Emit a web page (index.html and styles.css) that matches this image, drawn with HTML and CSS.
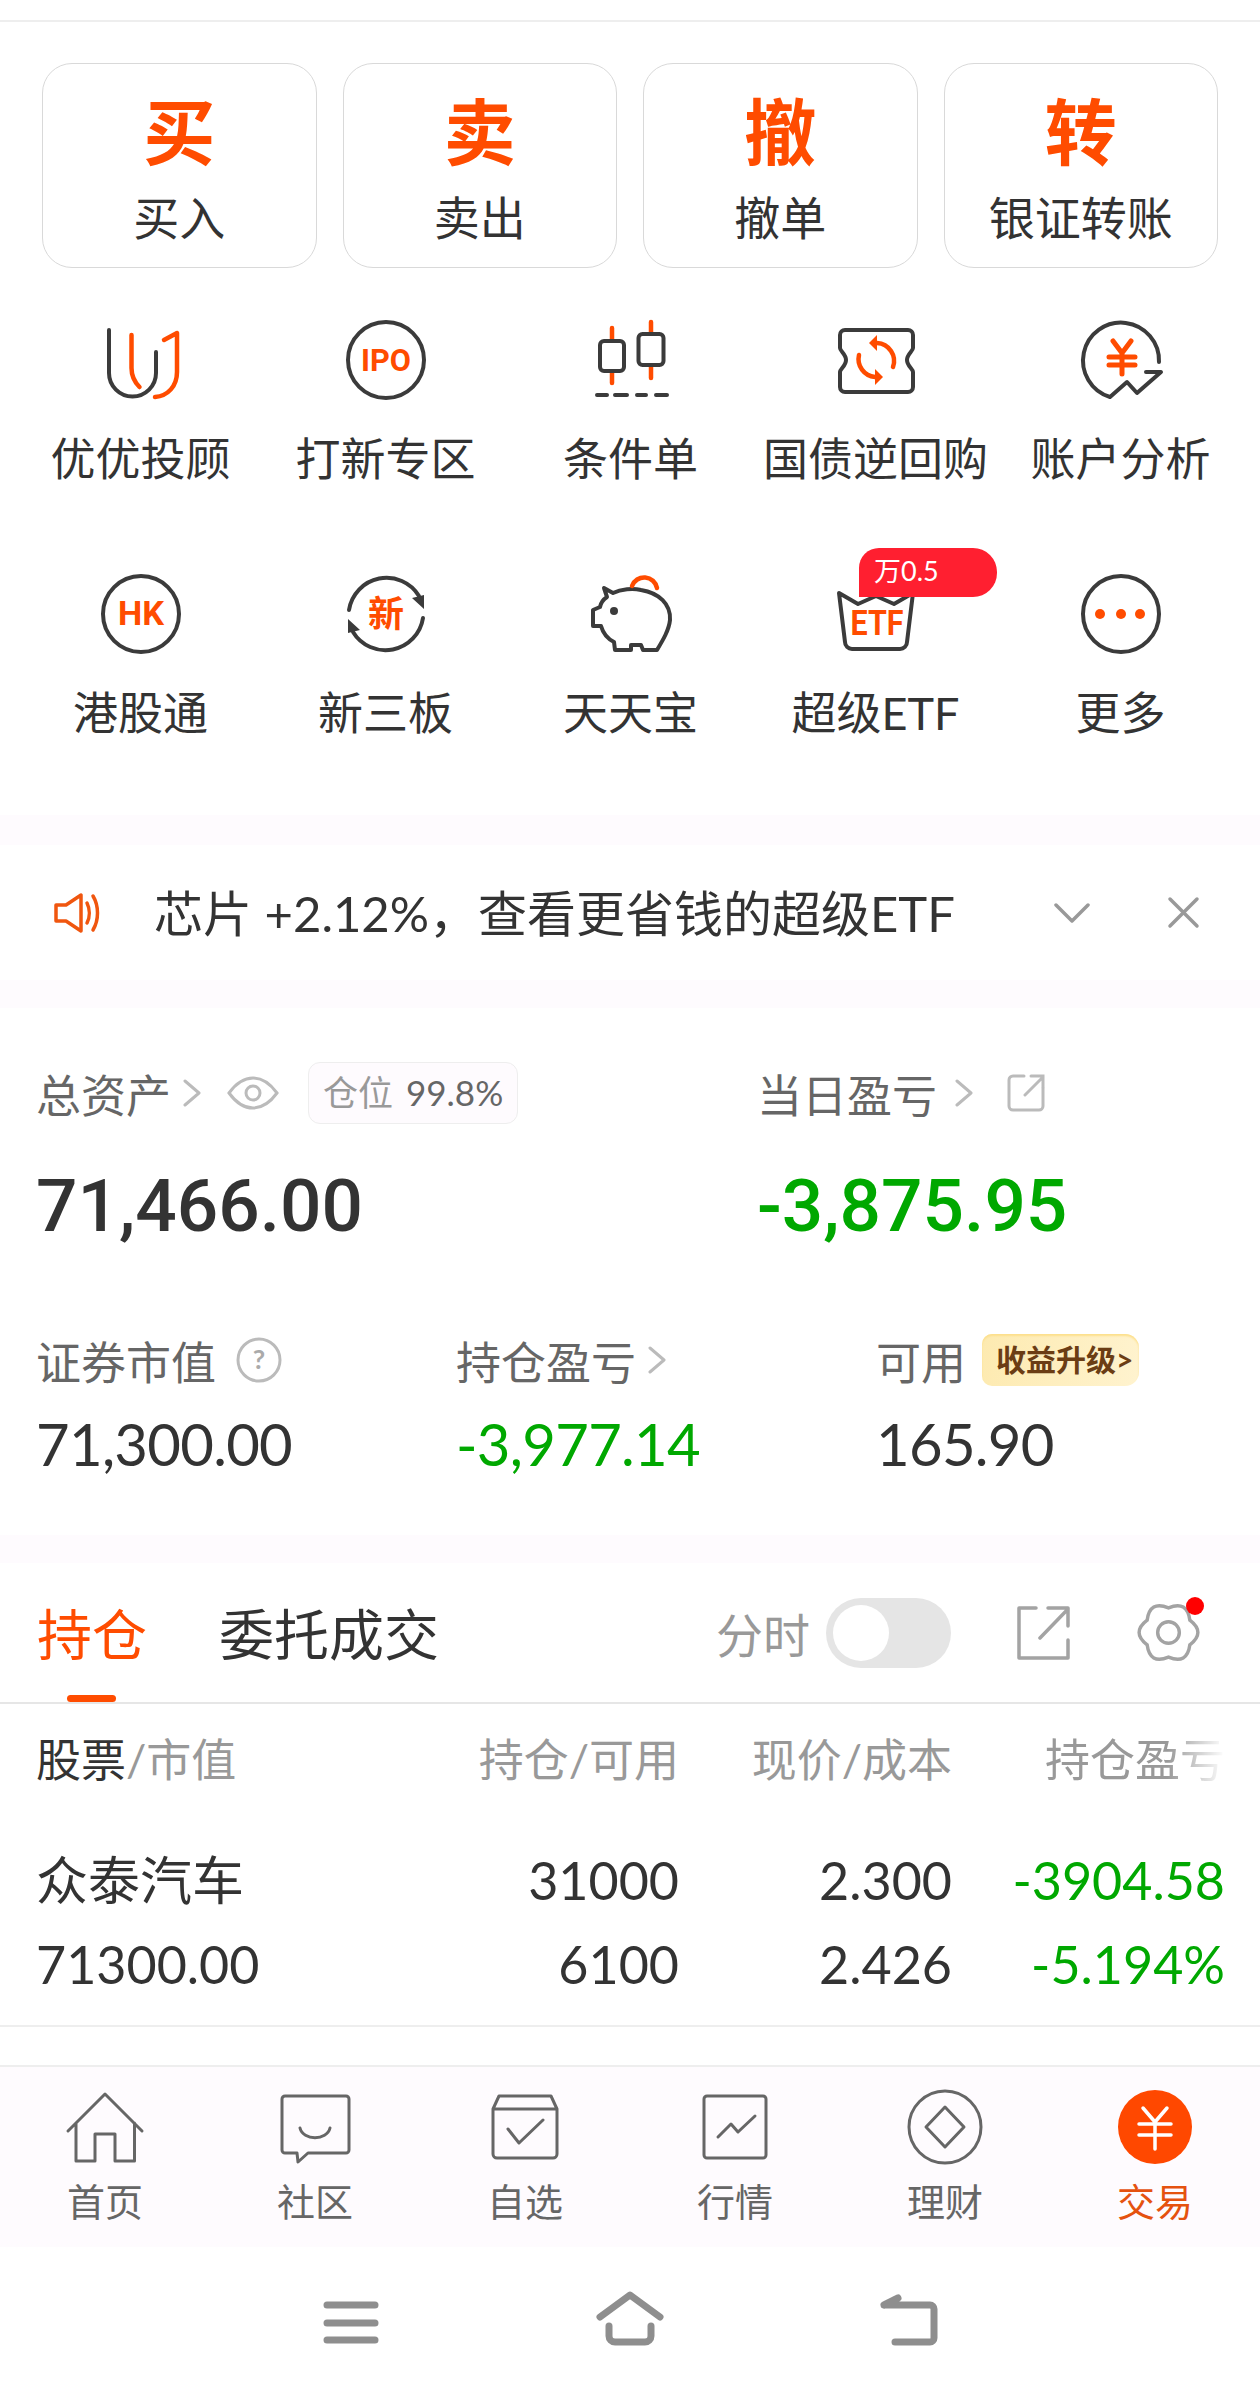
FILE: index.html
```html
<!DOCTYPE html>
<html lang="zh-CN">
<head>
    <meta charset="UTF-8">
    <meta name="viewport" content="width=device-width, initial-scale=1.0">
    <title>交易</title>
    <link rel="stylesheet" href="styles.css">
</head>
<body>
    <div class="top-line"></div>

    <div class="actions">
        <div class="action"><span class="action-big">买</span><span class="action-name">买入</span></div>
        <div class="action"><span class="action-big">卖</span><span class="action-name">卖出</span></div>
        <div class="action"><span class="action-big">撤</span><span class="action-name">撤单</span></div>
        <div class="action"><span class="action-big">转</span><span class="action-name">银证转账</span></div>
    </div>

    <div class="menu">
        <div class="menu-item">
            <svg class="ico" viewBox="0 0 80 80">
                <path class="ln" d="M8 10V53a23.500 23.500 0 0 0 47 0V32"/>
                <path class="or" d="M30.500 15V48c0 8 3 14 8 19M63 20l13-7V52c0 14-9 24-22 25"/>
            </svg>
            <span>优优投顾</span>
        </div>
        <div class="menu-item">
            <svg class="ico" viewBox="0 0 80 80">
                <circle class="ln" cx="40" cy="40" r="38"/>
                <text class="ico-text" x="40" y="51" font-size="31" textLength="50" lengthAdjust="spacingAndGlyphs">IPO</text>
            </svg>
            <span>打新专区</span>
        </div>
        <div class="menu-item">
            <svg class="ico" viewBox="0 0 80 80">
                <path class="or" d="M21 8V63M60 2V58"/>
                <rect class="ln fill-w" x="9" y="21" width="24" height="30" rx="4"/>
                <rect class="ln fill-w" x="47.500" y="14" width="25" height="31" rx="4"/>
                <path class="ln" d="M6 75H16M24 75H36M46 75H55M65 75H76"/>
            </svg>
            <span>条件单</span>
        </div>
        <div class="menu-item">
            <svg class="ico" viewBox="0 0 80 80">
                <path class="ln" d="M9 10H72a5 5 0 0 1 5 5V28c0 3-6 6-6 12s6 9 6 12V67a5 5 0 0 1-5 5H9a5 5 0 0 1-5-5V52c0-3 6-6 6-12s-6-9-6-12V15a5 5 0 0 1 5-5Z"/>
                <path class="or" d="M57 47A18 18 0 0 0 41 23M23 35A18 18 0 0 0 39 57"/>
                <path class="or-fill" d="M33 23 41 15V31ZM47 57 39 49V65Z"/>
            </svg>
            <span>国债逆回购</span>
        </div>
        <div class="menu-item">
            <svg class="ico" viewBox="0 0 80 80">
                <path class="ln" d="M78 42A38 38 0 1 0 29 77L46 62 56 73 80 52H65"/>
                <path class="or or-bold" d="M32 21 41 33 50 21M28 37H54M28 45H54M41 33V54"/>
            </svg>
            <span>账户分析</span>
        </div>
        <div class="menu-item">
            <svg class="ico" viewBox="0 0 80 80">
                <circle class="ln" cx="40" cy="40" r="38"/>
                <text class="ico-text" x="40" y="51" font-size="33" textLength="46" lengthAdjust="spacingAndGlyphs">HK</text>
            </svg>
            <span>港股通</span>
        </div>
        <div class="menu-item">
            <svg class="ico" viewBox="0 0 80 80">
                <path class="ln" d="M3 36A38 38 0 0 1 73 22M77 44A38 38 0 0 1 7 58"/>
                <path class="ln-fill" d="M66 24 78 21V35ZM14 56 2 59V45Z"/>
                <text class="ico-text" x="40" y="53" font-size="36">新</text>
            </svg>
            <span>新三板</span>
        </div>
        <div class="menu-item">
            <svg class="ico" viewBox="0 0 80 80">
                <path class="ln" d="M13 14 22 19C30 15 42 14 50 16 68 19 80 30 79 46 78 56 72 66 66 76H52L50 71H40V76H24L23 68C17 65 12 59 10 52H2V36L9 33C10 28 13 25 16 23Z"/>
                <circle class="ln-fill" cx="23" cy="37" r="4"/>
                <path class="or" d="M41 12A13 13 0 0 1 66 14"/>
            </svg>
            <span>天天宝</span>
        </div>
        <div class="menu-item">
            <svg class="ico" viewBox="0 0 80 80">
                <path class="ln" d="M3 19 22 30 40 22 58 30 77 19 71 68a7 7 0 0 1-7 7H16a7 7 0 0 1-7-7Z"/>
                <text class="ico-text" x="41" y="61" font-size="35" textLength="53" lengthAdjust="spacingAndGlyphs">ETF</text>
            </svg>
            <span>超级ETF</span>
            <em class="menu-badge">万0.5</em>
        </div>
        <div class="menu-item">
            <svg class="ico" viewBox="0 0 80 80">
                <circle class="ln" cx="40" cy="40" r="38"/>
                <circle class="or-fill" cx="19" cy="40" r="5"/>
                <circle class="or-fill" cx="40" cy="40" r="5"/>
                <circle class="or-fill" cx="59" cy="40" r="5"/>
            </svg>
            <span>更多</span>
        </div>
    </div>

    <div class="band"></div>

    <div class="notice">
        <svg class="notice-sound" viewBox="0 0 46 40">
            <path d="M2 12H12L27 2V38L12 28H2Z"/>
            <path d="M33 10c3 6 3 14 0 20M39 3c6 10 6 24 0 34"/>
        </svg>
        <span class="notice-text">芯片 +2.12%，查看更省钱的超级ETF</span>
        <svg class="notice-down" viewBox="0 0 36 22"><path d="M2 3 18 19 34 3"/></svg>
        <svg class="notice-close" viewBox="0 0 33 33"><path d="M3 3 30 30M30 3 3 30"/></svg>
    </div>

    <div class="band band-low"></div>

    <div class="assets">
        <div class="asset-top">
            <div>
                <div class="asset-label">
                    <span>总资产</span>
                    <svg class="chev" viewBox="0 0 18 30"><path d="M2 3 16 15 2 27"/></svg>
                    <svg class="eye" viewBox="0 0 52 34">
                        <path d="M2 17C10 6 18 2 26 2s16 4 24 15C42 28 34 32 26 32S10 28 2 17Z"/>
                        <circle cx="26" cy="17" r="7"/>
                    </svg>
                    <span class="cang"><i>仓位</i> 99.8%</span>
                </div>
                <div class="asset-big">71,466.00</div>
            </div>
            <div>
                <div class="asset-label">
                    <span>当日盈亏</span>
                    <svg class="chev chev-b" viewBox="0 0 18 30"><path d="M2 3 16 15 2 27"/></svg>
                    <svg class="share-sm" viewBox="0 0 38 38">
                        <path d="M17 2H6a4 4 0 0 0-4 4V32a4 4 0 0 0 4 4H32a4 4 0 0 0 4-4V14"/>
                        <path d="M18 21 36 3M24 2H36V13"/>
                    </svg>
                </div>
                <div class="asset-big green">-3,875.95</div>
            </div>
        </div>
        <div class="asset-bottom">
            <div>
                <div class="asset-label asset-label-s">
                    <span>证券市值</span>
                    <svg class="help" viewBox="0 0 46 46">
                        <circle cx="23" cy="23" r="21"/>
                        <text x="23" y="32" font-size="27">?</text>
                    </svg>
                </div>
                <div class="asset-mid">71,300.00</div>
            </div>
            <div>
                <div class="asset-label asset-label-s">
                    <span>持仓盈亏</span>
                    <svg class="chev" viewBox="0 0 18 30"><path d="M2 3 16 15 2 27"/></svg>
                </div>
                <div class="asset-mid green">-3,977.14</div>
            </div>
            <div>
                <div class="asset-label asset-label-s">
                    <span>可用</span>
                    <span class="upgrade">收益升级&gt;</span>
                </div>
                <div class="asset-mid">165.90</div>
            </div>
        </div>
    </div>

    <div class="band band-tab"></div>

    <div class="tabs">
        <span class="tab tab-on">持仓</span>
        <span class="tab">委托成交</span>
        <div class="tools">
            <span class="tools-label">分时</span>
            <span class="toggle"><span class="toggle-knob"></span></span>
            <svg class="share" viewBox="0 0 54 54">
                <path d="M20 2H3V52H52V34"/>
                <path d="M24 32 52 3M32 2H52V20"/>
            </svg>
            <span class="gear-wrap">
                <svg class="gear" viewBox="0 0 64 64">
                    <path d="M32 7Q51-.9 53.700 19.500 70 32 53.700 44.500 51 64.900 32 57 13 64.900 10.300 44.500-6 32 10.300 19.500 13-.9 32 7Z"/>
                    <circle cx="32" cy="32" r="11"/>
                </svg>
                <i class="dot"></i>
            </span>
        </div>
    </div>

    <div class="table-head">
        <span><b>股票</b>/市值</span>
        <span>持仓/可用</span>
        <span>现价/成本</span>
        <span class="fade">持仓盈亏</span>
    </div>
    <div class="table-body">
        <div class="table-row">
            <span>众泰汽车</span>
            <span>31000</span>
            <span>2.300</span>
            <span class="green">-3904.58</span>
        </div>
        <div class="table-row">
            <span>71300.00</span>
            <span>6100</span>
            <span>2.426</span>
            <span class="green">-5.194%</span>
        </div>
    </div>

    <div class="tabbar">
        <div class="bar-item">
            <svg class="bar-ico" viewBox="0 0 80 80">
                <path d="M3 44 40 7 77 44M11 36V74H30V47H50V74H69.500V36"/>
            </svg>
            <span>首页</span>
        </div>
        <div class="bar-item">
            <svg class="bar-ico" viewBox="0 0 80 80">
                <path d="M10 9H71a3 3 0 0 1 3 3V63a3 3 0 0 1-3 3H33L23 75 22 66H10a3 3 0 0 1-3-3V12a3 3 0 0 1 3-3Z"/>
                <path d="M25 41c3 13 27 13 30 0"/>
            </svg>
            <span>社区</span>
        </div>
        <div class="bar-item">
            <svg class="bar-ico" viewBox="0 0 80 80">
                <path d="M8 22 14 9H66L72 22V67a4 4 0 0 1-4 4H12a4 4 0 0 1-4-4ZM8 22H72"/>
                <path d="M23 42 34 56 58 33"/>
            </svg>
            <span>自选</span>
        </div>
        <div class="bar-item">
            <svg class="bar-ico" viewBox="0 0 80 80">
                <rect x="9" y="9" width="62" height="62" rx="3"/>
                <path d="M23 50 36 37 43 45 60 29"/>
            </svg>
            <span>行情</span>
        </div>
        <div class="bar-item">
            <svg class="bar-ico" viewBox="0 0 80 80">
                <circle cx="40" cy="40" r="36"/>
                <path d="M40 20 59 40 40 60 21 40Z"/>
            </svg>
            <span>理财</span>
        </div>
        <div class="bar-item bar-item-on">
            <svg class="bar-ico" viewBox="0 0 80 80">
                <circle class="trade-disc" cx="40" cy="40" r="37"/>
                <path class="trade-mark" d="M28 21 40 35 52 21M24 37H56M24 48H56M40 35V62"/>
            </svg>
            <span>交易</span>
        </div>
    </div>

    <div class="nav">
        <div class="nav-item">
            <svg class="nav-ico" viewBox="0 0 60 60">
                <path d="M7 12H55M7 30H55M7 47H55"/>
            </svg>
        </div>
        <div class="nav-item">
            <svg class="nav-ico nav-home" viewBox="0 0 72 60">
                <path d="M6 24 36 2 66 24M15 33V43a6 6 0 0 0 6 6H51a6 6 0 0 0 6-6V33"/>
            </svg>
        </div>
        <div class="nav-item">
            <svg class="nav-ico" viewBox="0 0 60 60">
                <path d="M4 12H50a4 4 0 0 1 4 4V45a4 4 0 0 1-4 4H15M4 12 18 5"/>
            </svg>
        </div>
    </div>
</body>
</html>
```

FILE: styles.css
```css
* {
    box-sizing: border-box;
}
body {
    margin: 0;
    width: 1260px;
    height: 2395px;
    overflow: hidden;
    background: #fff;
    color: #333;
    font-family: Lato, "Noto Sans CJK SC", sans-serif;
}
i, em {
    font-style: normal;
}
.top-line {
    height: 22px;
    border-bottom: 2px solid #eee;
}

/* buy / sell cards */
.actions {
    display: grid;
    grid-template-columns: repeat(4, 1fr);
    gap: 26px;
    padding: 41px 42px 0;
}
.action {
    height: 205px;
    border: 1.5px solid #d9d9d9;
    border-radius: 30px;
    display: flex;
    flex-direction: column;
    align-items: center;
    padding-top: 32px;
}
.action-big {
    font-size: 72px;
    line-height: 70px;
    font-weight: 700;
    color: #ff4c00;
}
.action-name {
    font-size: 46px;
    line-height: 50px;
    margin-top: 27px;
}

/* icon menu */
.menu {
    display: grid;
    grid-template-columns: repeat(5, 245px);
    row-gap: 90px;
    padding: 52px 17px 77px 18px;
}
.menu-item {
    position: relative;
    display: flex;
    flex-direction: column;
    align-items: center;
    font-size: 45px;
    line-height: 50px;
    white-space: nowrap;
}
.menu-item span {
    margin-top: 34px;
}
.ico {
    width: 80px;
    height: 80px;
    overflow: visible;
}
.ln, .or {
    fill: none;
    stroke-width: 4;
    stroke-linecap: round;
    stroke-linejoin: round;
}
.ln {
    stroke: #3b3b3b;
}
.or {
    stroke: #ff4c00;
    stroke-width: 4.500;
}
.or-bold {
    stroke-width: 5;
}
.fill-w {
    fill: #fff;
}
.ln-fill {
    fill: #3b3b3b;
}
.or-fill {
    fill: #ff4c00;
}
.ico-text {
    fill: #ff4c00;
    font-weight: 700;
    text-anchor: middle;
    font-family: Roboto, "Noto Sans CJK SC", sans-serif;
}
.menu-badge {
    position: absolute;
    left: 106px;
    top: -26px;
    width: 138px;
    height: 49px;
    padding-left: 15px;
    border-radius: 20px 24px 24px 0;
    background: #ff1f30;
    color: #fff;
    font-size: 27px;
    line-height: 46px;
}

.band {
    height: 30px;
    background: #fefbfe;
}
.band-low {
    height: 28px;
}
.band-tab {
    height: 28px;
}

/* notice */
.notice {
    height: 135px;
    display: flex;
    align-items: center;
    padding: 0 60px 0 54px;
}
.notice-sound {
    width: 46px;
    height: 40px;
    overflow: visible;
}
.notice-sound path {
    fill: none;
    stroke: #f0560f;
    stroke-width: 3.500;
    stroke-linejoin: round;
    stroke-linecap: round;
}
.notice-text {
    margin-left: 54px;
    margin-right: auto;
    font-size: 49px;
    line-height: 62px;
    height: 62px;
    white-space: nowrap;
}
.notice-down, .notice-close {
    flex: none;
    fill: none;
    stroke: #999;
    stroke-width: 3.500;
    stroke-linecap: round;
    stroke-linejoin: round;
}
.notice-down {
    width: 36px;
    height: 22px;
}
.notice-close {
    width: 33px;
    height: 33px;
    margin-left: 77px;
}

/* assets */
.assets {
    height: 527px;
    padding: 54px 0 0 36px;
}
.asset-top {
    display: grid;
    grid-template-columns: 721px auto;
}
.asset-label {
    height: 62px;
    display: flex;
    align-items: center;
    font-size: 45px;
    color: #666;
}
.asset-label-s {
    height: 52px;
}
.chev {
    width: 18px;
    height: 30px;
    margin-left: 12px;
    fill: none;
    stroke: #bbb;
    stroke-width: 3;
    stroke-linecap: round;
    stroke-linejoin: round;
}
.chev-b {
    margin-left: 18px;
}
.eye {
    width: 52px;
    height: 34px;
    margin-left: 26px;
    fill: none;
    stroke: #bbb;
    stroke-width: 3;
}
.cang {
    height: 62px;
    margin-left: 29px;
    padding: 0 14px 0 14px;
    border: 1.5px solid #eee;
    border-radius: 12px;
    background: #fefbfe;
    font-size: 35px;
    line-height: 58px;
    white-space: nowrap;
}
.cang i {
    color: #999;
    margin-right: 4px;
}
.share-sm {
    width: 38px;
    height: 38px;
    margin-left: 34px;
    fill: none;
    stroke: #bbb;
    stroke-width: 3;
    stroke-linecap: round;
}
.asset-big {
    margin-top: 37px;
    font-family: Roboto, "Noto Sans CJK SC", sans-serif;
    font-size: 73px;
    line-height: 90px;
    font-weight: 500;
}
.green {
    color: #00a800;
}
.asset-bottom {
    display: grid;
    grid-template-columns: 420px 420px auto;
    margin-top: 83px;
}
.help {
    width: 46px;
    height: 46px;
    margin-left: 20px;
    fill: none;
    stroke: #bbb;
    stroke-width: 3;
}
.help text {
    fill: #aaa;
    stroke: none;
    text-anchor: middle;
    font-weight: 700;
}
.upgrade {
    height: 52px;
    margin-left: 16px;
    padding: 0 6px 0 14px;
    border-radius: 10px 14px 14px 10px;
    background: linear-gradient(100deg, #fdeab0, #fff3cf);
    box-shadow: inset 0 2px 2px #fde08d;
    color: #6b3d14;
    font-size: 30px;
    font-weight: 700;
    line-height: 50px;
    white-space: nowrap;
}
.asset-mid {
    margin-top: 23px;
    font-size: 58px;
    line-height: 70px;
    letter-spacing: -0.7px;
}

/* positions */
.tabs {
    height: 141px;
    display: flex;
    align-items: center;
    padding-left: 37px;
    border-bottom: 2px solid #e6e6e6;
}
.tab {
    position: relative;
    height: 139px;
    font-size: 55px;
    line-height: 143px;
    margin-right: 72px;
}
.tab-on {
    color: #ff4c00;
}
.tab-on::after {
    content: "";
    position: absolute;
    left: 30px;
    bottom: 0;
    width: 49px;
    height: 7px;
    border-radius: 4px;
    background: #ff4c00;
}
.tools {
    margin-left: auto;
    padding-right: 60px;
    display: flex;
    align-items: center;
    color: #999;
}
.tools-label {
    font-size: 47px;
}
.toggle {
    width: 125px;
    height: 70px;
    margin-left: 16px;
    padding: 7px;
    border-radius: 35px;
    background: #e5e5e5;
}
.toggle-knob {
    display: block;
    width: 56px;
    height: 56px;
    border-radius: 50%;
    background: #fff;
}
.share {
    width: 54px;
    height: 54px;
    margin-left: 65px;
    fill: none;
    stroke: #a3a3a3;
    stroke-width: 3.500;
    stroke-linejoin: round;
    stroke-linecap: round;
}
.gear-wrap {
    position: relative;
    display: block;
    width: 63px;
    height: 63px;
    margin-left: 67px;
}
.gear {
    display: block;
    width: 63px;
    height: 63px;
    fill: none;
    stroke: #a3a3a3;
    stroke-width: 3.500;
}
.dot {
    position: absolute;
    right: -4px;
    top: -4px;
    width: 18px;
    height: 18px;
    border-radius: 50%;
    background: #f00;
}
.table-head, .table-row {
    display: grid;
    grid-template-columns: 1fr 273px 273px 273px;
    padding: 0 35px 0 36px;
    white-space: nowrap;
}
.table-head span:not(:first-child), .table-row span:not(:first-child) {
    text-align: right;
}
.table-head {
    height: 112px;
    font-size: 45px;
    line-height: 112px;
    color: #999;
}
.table-head b {
    color: #333;
    font-weight: 400;
}
.fade {
    -webkit-mask-image: linear-gradient(to right, #000 68%, transparent 100%);
    mask-image: linear-gradient(to right, #000 68%, transparent 100%);
    justify-self: end;
}
.table-body {
    height: 211px;
    padding: 22px 0 19px;
    border-bottom: 2px solid #eee;
    margin-bottom: 38px;
}
.table-row {
    height: 84px;
    font-size: 52px;
    line-height: 84px;
}

/* bottom bar */
.tabbar {
    height: 182px;
    display: grid;
    grid-template-columns: repeat(6, 1fr);
    border-top: 2px solid #eee;
    background: #fefbfe;
}
.bar-item {
    display: flex;
    flex-direction: column;
    align-items: center;
    padding-top: 20px;
    color: #666;
    font-size: 38px;
    line-height: 44px;
}
.bar-item span {
    margin-top: 12px;
}
.bar-ico {
    width: 80px;
    height: 80px;
    fill: none;
    stroke: #666;
    stroke-width: 3;
    stroke-linejoin: round;
    stroke-linecap: round;
}
.bar-item-on {
    color: #e5520f;
}
.trade-disc {
    fill: #ff4800;
    stroke: none;
}
.trade-mark {
    stroke: #fff;
    stroke-width: 3.500;
}

/* android nav */
.nav {
    height: 148px;
    display: flex;
    justify-content: center;
    align-items: center;
    padding-top: 4px;
}
.nav-item {
    width: 280px;
    display: flex;
    justify-content: center;
}
.nav-ico {
    width: 60px;
    height: 60px;
    fill: none;
    stroke: #8e8e8e;
    stroke-width: 7;
    stroke-linecap: round;
    stroke-linejoin: round;
    overflow: visible;
}
.nav-home {
    width: 72px;
}
```
